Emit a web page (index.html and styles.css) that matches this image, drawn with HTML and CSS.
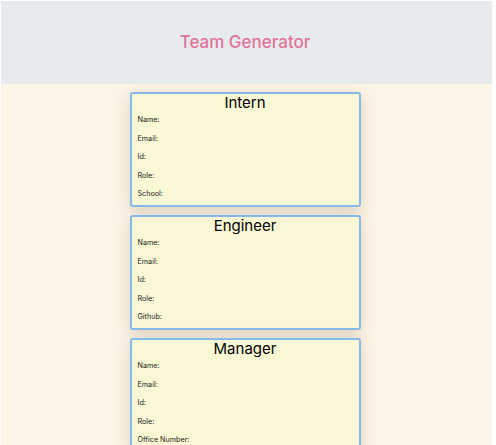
FILE: index.html
```html
<!DOCTYPE html>
<html lang="en">
<head>
<meta charset="utf-8">
<title>Team Generator</title>
<link rel="stylesheet" href="styles.css">
</head>
<body>
<div class="page">
  <header class="header">
    <h1 class="title">Team Generator</h1>
  </header>
  <main class="main">
    <section class="card">
      <h2 class="card-title">Intern</h2>
      <div class="fields">
        <p>Name:</p>
        <p>Email:</p>
        <p>Id:</p>
        <p>Role:</p>
        <p>School:</p>
      </div>
    </section>
    <section class="card">
      <h2 class="card-title">Engineer</h2>
      <div class="fields">
        <p>Name:</p>
        <p>Email:</p>
        <p>Id:</p>
        <p>Role:</p>
        <p>Github:</p>
      </div>
    </section>
    <section class="card">
      <h2 class="card-title">Manager</h2>
      <div class="fields">
        <p>Name:</p>
        <p>Email:</p>
        <p>Id:</p>
        <p>Role:</p>
        <p>Office Number:</p>
      </div>
    </section>
  </main>
</div>
</body>
</html>
```
FILE: styles.css
```css
html, body {
  margin: 0;
  padding: 0;
  background: #ffffff;
}
body {
  font-family: Inter, "Liberation Sans", sans-serif;
  color: #111;
}
.page {
  margin: 1px 4px 0 1px;
  background: #fcf4e5;
  min-height: 444px;
}
.header {
  height: 83px;
  padding-right: 3px;
  padding-bottom: 2px;
  box-sizing: border-box;
  background: #e8ebee;
  display: flex;
  align-items: center;
  justify-content: center;
}
.title {
  margin: 0;
  font-size: 17px;
  font-weight: 500;
  color: #e07399;
}
.main {
  padding-top: 8px;
  padding-right: 3px;
  display: flex;
  flex-direction: column;
  align-items: center;
  gap: 8px;
}
.card {
  box-sizing: border-box;
  width: 231px;
  border: 2px solid #89b8ec;
  border-radius: 3px;
  background: #fbf8d5;
  box-shadow: 0 4px 16px rgba(90, 60, 30, 0.18);
  padding: 0 6px 6px;
}
.card-title {
  margin: 0 0 4px;
  font-size: 15px;
  line-height: 17px;
  font-weight: 400;
  text-align: center;
  color: #000;
}
.fields {
  display: flex;
  flex-direction: column;
  gap: 8.5px;
}
.fields p {
  margin: 0;
  font-size: 7.2px;
  line-height: 10px;
  color: #1a1a1a;
}
```
